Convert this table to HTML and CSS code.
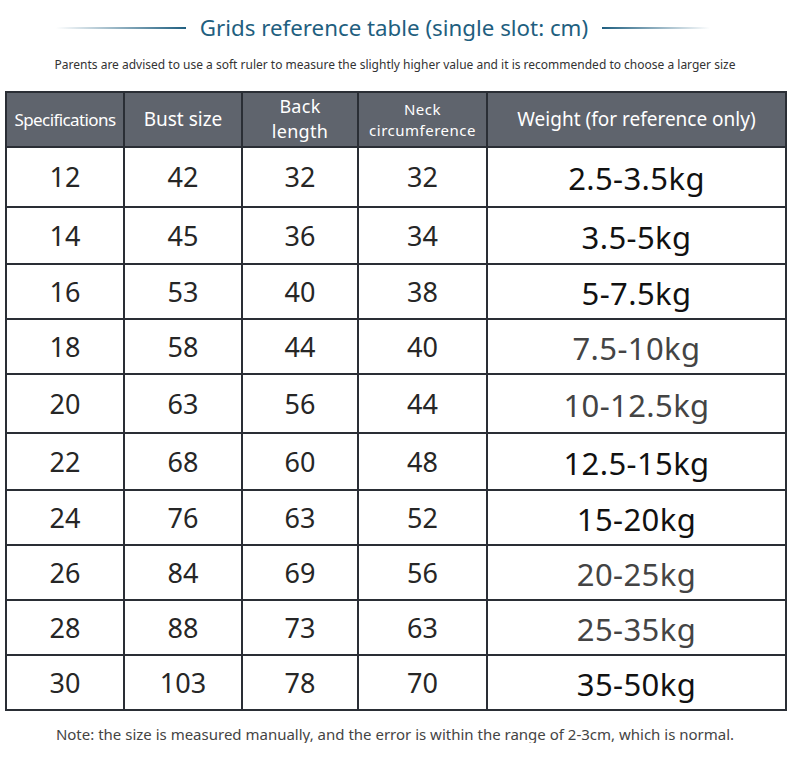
FILE: index.html
```html
<!DOCTYPE html>
<html>
<head>
<meta charset="utf-8">
<link rel="stylesheet" href="styles.css">
</head>
<body>
<div class="page">
  <div class="title-row">
    <span class="line line-left"></span>
    <h1 class="title">Grids reference table (single slot: cm)</h1>
    <span class="line line-right"></span>
  </div>
  <p class="subtitle">Parents are advised to use a soft ruler to measure the slightly higher value and it is recommended to choose a larger size</p>
  <table class="size-table">
    <colgroup>
      <col class="c1"><col class="c2"><col class="c3"><col class="c4"><col class="c5">
    </colgroup>
    <thead>
      <tr>
        <th class="h-small">Specifications</th>
        <th>Bust size</th>
        <th class="h-two">Back<br>length</th>
        <th class="h-neck">Neck<br>circumference</th>
        <th>Weight (for reference only)</th>
      </tr>
    </thead>
    <tbody>
      <tr><td>12</td><td>42</td><td>32</td><td>32</td><td class="kg">2.5-3.5kg</td></tr>
      <tr><td>14</td><td>45</td><td>36</td><td>34</td><td class="kg">3.5-5kg</td></tr>
      <tr><td>16</td><td>53</td><td>40</td><td>38</td><td class="kg">5-7.5kg</td></tr>
      <tr><td>18</td><td>58</td><td>44</td><td>40</td><td class="kg soft">7.5-10kg</td></tr>
      <tr><td>20</td><td>63</td><td>56</td><td>44</td><td class="kg soft">10-12.5kg</td></tr>
      <tr><td>22</td><td>68</td><td>60</td><td>48</td><td class="kg">12.5-15kg</td></tr>
      <tr><td>24</td><td>76</td><td>63</td><td>52</td><td class="kg">15-20kg</td></tr>
      <tr><td>26</td><td>84</td><td>69</td><td>56</td><td class="kg soft">20-25kg</td></tr>
      <tr><td>28</td><td>88</td><td>73</td><td>63</td><td class="kg soft">25-35kg</td></tr>
      <tr><td>30</td><td>103</td><td>78</td><td>70</td><td class="kg">35-50kg</td></tr>
    </tbody>
  </table>
  <p class="note">Note: the size is measured manually, and the error is within the range of 2-3cm, which is normal.</p>
</div>
</body>
</html>
```

FILE: styles.css
```css
html, body {
  margin: 0;
  padding: 0;
  background: #ffffff;
}

body {
  font-family: "Noto Sans", "Open Sans", sans-serif;
  color: #222;
}

.page {
  width: 790px;
  padding-top: 14px;
}

.title-row {
  display: flex;
  align-items: center;
  justify-content: center;
  gap: 14px;
  height: 28px;
  padding-right: 24px;
}

.title {
  margin: 0;
  font-weight: 400;
  font-size: 22.3px;
  line-height: 28px;
  color: #1f5f80;
  white-space: nowrap;
}

.line {
  display: block;
  height: 2px;
}

.line-left {
  width: 130px;
  background: linear-gradient(to right, rgba(31, 95, 128, 0), #1f5f80);
}

.line-right {
  width: 108px;
  background: linear-gradient(to left, rgba(31, 95, 128, 0), #1f5f80);
}

.subtitle {
  margin: 16px 0 0;
  text-align: center;
  font-size: 12px;
  line-height: 14px;
  color: #333;
  white-space: nowrap;
}

.size-table {
  margin: 19px 0 0 5px;
  width: 780px;
  border-collapse: collapse;
  table-layout: fixed;
}

.c1 { width: 118px; }
.c2 { width: 118px; }
.c3 { width: 116px; }
.c4 { width: 129px; }
.c5 { width: 299px; }

.size-table th,
.size-table td {
  border: 2px solid #2a2e35;
  text-align: center;
  padding: 0;
  line-height: 1.15;
}

.size-table thead tr { height: 55px; }
.size-table tbody tr { height: 55px; }
.size-table tbody tr:nth-child(1) { height: 60px; }
.size-table tbody tr:nth-child(2) { height: 57px; }
.size-table tbody tr:nth-child(5) { height: 59px; }
.size-table tbody tr:nth-child(6) { height: 57px; }

.size-table th {
  background: #5f646d;
  color: #fff;
  font-weight: 400;
  font-size: 19px;
}

.size-table th.h-small {
  font-size: 17px;
  letter-spacing: -0.6px;
}

.size-table th.h-two {
  font-size: 18px;
  line-height: 24.5px;
  letter-spacing: 0.3px;
  padding-bottom: 2px;
}

.size-table th.h-neck {
  font-size: 15px;
  line-height: 20.5px;
  letter-spacing: 0.5px;
}

.size-table td {
  font-size: 27px;
  color: #262626;
}

.size-table td.kg {
  font-size: 31px;
  letter-spacing: 0.4px;
  color: #111;
  padding-top: 4px;
}

.size-table td.soft {
  color: #444;
}

.note {
  margin: 14px 0 0;
  text-align: center;
  font-size: 15px;
  line-height: 18px;
  color: #444;
  white-space: nowrap;
}
```
